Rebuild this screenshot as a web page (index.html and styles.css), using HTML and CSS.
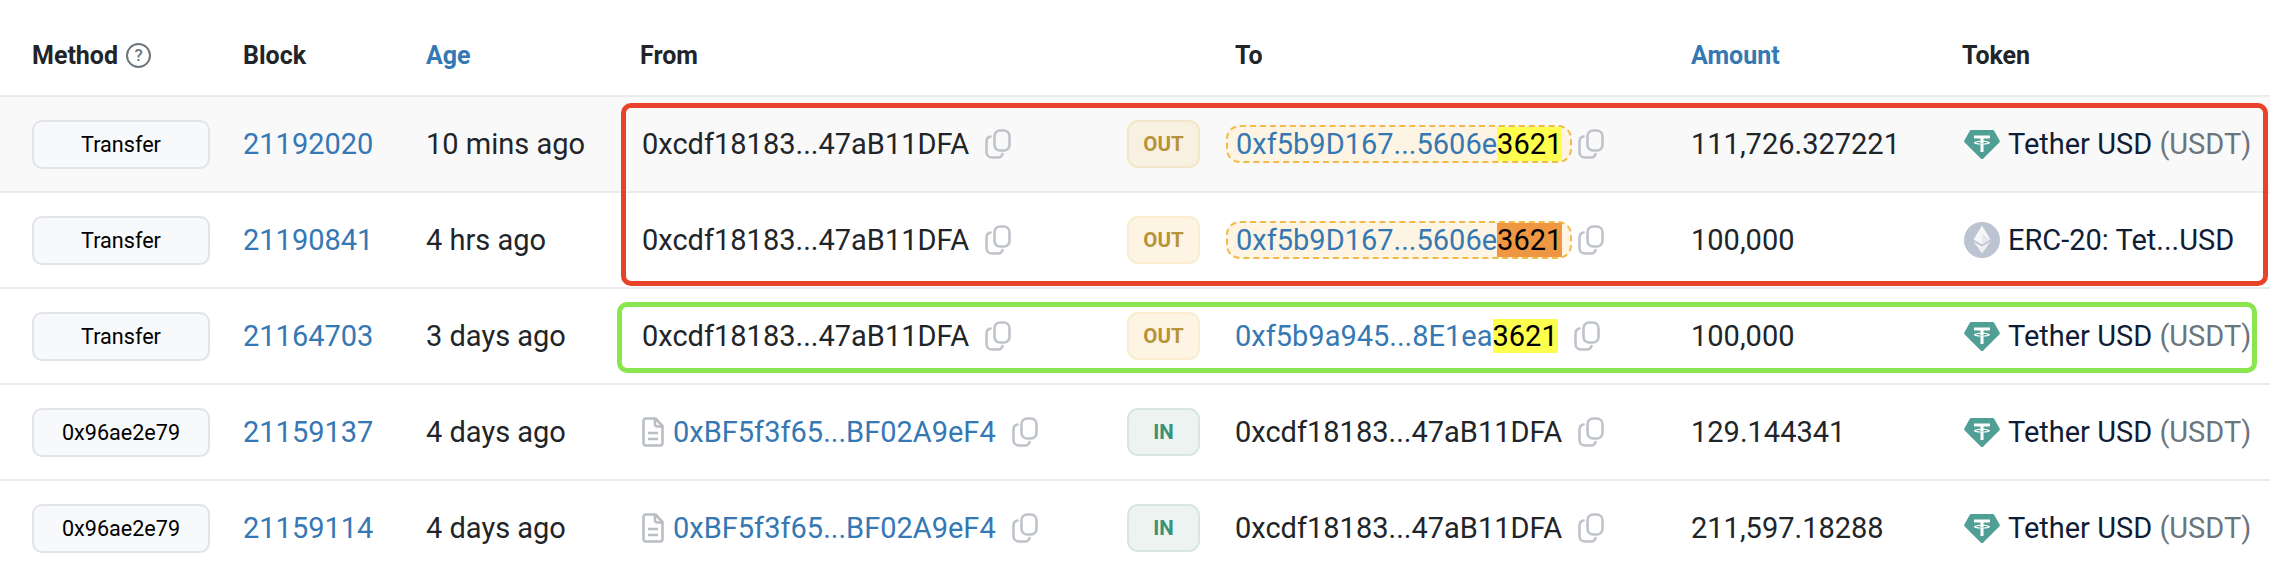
FILE: index.html
```html
<!DOCTYPE html>
<html lang="en">
<head>
<meta charset="utf-8">
<title>Transactions</title>
<link rel="stylesheet" href="styles.css">
</head>
<body>
<svg class="defs" width="0" height="0" aria-hidden="true">
  <symbol id="copy" viewBox="0 0 26 30">
    <rect x="9.5" y="1.5" width="15" height="20" rx="5.5" fill="none" stroke="currentColor" stroke-width="2.6"/>
    <path d="M5.5 7.5C3 8 1.5 10 1.5 12.5V23c0 3 2.400 5.500 5.500 5.500h6c2.500 0 4-1.500 4.500-3.500" fill="none" stroke="currentColor" stroke-width="2.600" stroke-linecap="round"/>
  </symbol>
  <symbol id="file" viewBox="0 0 22 30">
    <path d="M4 1.500h9.500l7 7.500v17c0 1.500-1 2.500-2.500 2.500H4c-1.500 0-2.500-1-2.500-2.500V4C1.500 2.500 2.500 1.500 4 1.500Z" fill="none" stroke="currentColor" stroke-width="2.600" stroke-linejoin="round"/>
    <path d="M13 2v5c0 1.500 1 2.500 2.500 2.500H20M6 16h10M6 22h10" fill="none" stroke="currentColor" stroke-width="2.600"/>
  </symbol>
  <symbol id="tether" viewBox="0 0 36 29">
    <path d="M7.500 0h21c.8 0 1.300.3 1.800 1l5.300 9.500c.4.700.3 1.400-.3 2L19.300 28.400c-.8.800-1.800.8-2.600 0L.7 12.500c-.6-.6-.7-1.300-.3-2L5.700 1C6.200.3 6.700 0 7.500 0Z" fill="#4f9f94"/>
    <path d="M10 5.500h16v3h-6.500v2.300c3.500.2 6.500.9 6.500 1.900s-3 1.700-6.500 1.900V22h-3v-7.400c-3.500-.2-6.500-.9-6.500-1.900s3-1.700 6.500-1.900V8.500H10Zm6.500 6.500c-2.300.1-4.200.4-4.700.8.800.5 3.300.8 6.200.8s5.400-.3 6.200-.8c-.5-.4-2.400-.7-4.700-.8v1.200h-3Z" fill="#fff"/>
  </symbol>
  <symbol id="eth" viewBox="0 0 36 36">
    <circle cx="18" cy="18" r="18" fill="#bcc3d1"/>
    <path d="M18 3.500 9.500 17.500 18 22.500l8.500-5Z" fill="#f6f7f9"/>
    <path d="M18 12v10.500l8.500-5Z" fill="#e6e8ee"/>
    <path d="M9.500 19.500 18 31.500l8.500-12L18 24.500Z" fill="#eef0f4"/>
  </symbol>
</svg>

<main class="table">
  <div class="row head">
    <div class="cell first">Method <span class="help">?</span></div>
    <div class="cell">Block</div>
    <div class="cell link">Age</div>
    <div class="cell from-head">From</div>
    <div class="cell"></div>
    <div class="cell to">To</div>
    <div class="cell link">Amount</div>
    <div class="cell">Token</div>
  </div>

  <div class="row shaded">
    <div class="cell first"><span class="method">Transfer</span></div>
    <div class="cell link">21192020</div>
    <div class="cell">10 mins ago</div>
    <div class="cell">0xcdf18183...47aB11DFA<svg class="copy from-copy"><use href="#copy"/></svg></div>
    <div class="cell"><span class="dir out dim">OUT</span></div>
    <div class="cell"><span class="pill link">0xf5b9D167...5606e<mark class="yellow">3621</mark></span><svg class="copy pill-copy"><use href="#copy"/></svg></div>
    <div class="cell">111,726.327221</div>
    <div class="cell token"><svg class="tether"><use href="#tether"/></svg>Tether USD&nbsp;<span class="sym">(USDT)</span></div>
  </div>

  <div class="row">
    <div class="cell first"><span class="method">Transfer</span></div>
    <div class="cell link">21190841</div>
    <div class="cell">4 hrs ago</div>
    <div class="cell">0xcdf18183...47aB11DFA<svg class="copy from-copy"><use href="#copy"/></svg></div>
    <div class="cell"><span class="dir out">OUT</span></div>
    <div class="cell"><span class="pill link">0xf5b9D167...5606e<mark class="orange">3621</mark></span><svg class="copy pill-copy"><use href="#copy"/></svg></div>
    <div class="cell">100,000</div>
    <div class="cell token"><svg class="eth"><use href="#eth"/></svg>ERC-20: Tet...USD</div>
  </div>

  <div class="row">
    <div class="cell first"><span class="method">Transfer</span></div>
    <div class="cell link">21164703</div>
    <div class="cell">3 days ago</div>
    <div class="cell">0xcdf18183...47aB11DFA<svg class="copy from-copy"><use href="#copy"/></svg></div>
    <div class="cell"><span class="dir out">OUT</span></div>
    <div class="cell to"><span class="link">0xf5b9a945...8E1ea<mark class="yellow">3621</mark></span><svg class="copy to-copy"><use href="#copy"/></svg></div>
    <div class="cell">100,000</div>
    <div class="cell token"><svg class="tether"><use href="#tether"/></svg>Tether USD&nbsp;<span class="sym">(USDT)</span></div>
  </div>

  <div class="row">
    <div class="cell first"><span class="method">0x96ae2e79</span></div>
    <div class="cell link">21159137</div>
    <div class="cell">4 days ago</div>
    <div class="cell"><svg class="file"><use href="#file"/></svg><span class="link">0xBF5f3f65...BF02A9eF4</span><svg class="copy from-copy"><use href="#copy"/></svg></div>
    <div class="cell"><span class="dir in">IN</span></div>
    <div class="cell to">0xcdf18183...47aB11DFA<svg class="copy to-copy"><use href="#copy"/></svg></div>
    <div class="cell">129.144341</div>
    <div class="cell token"><svg class="tether"><use href="#tether"/></svg>Tether USD&nbsp;<span class="sym">(USDT)</span></div>
  </div>

  <div class="row">
    <div class="cell first"><span class="method">0x96ae2e79</span></div>
    <div class="cell link">21159114</div>
    <div class="cell">4 days ago</div>
    <div class="cell"><svg class="file"><use href="#file"/></svg><span class="link">0xBF5f3f65...BF02A9eF4</span><svg class="copy from-copy"><use href="#copy"/></svg></div>
    <div class="cell"><span class="dir in">IN</span></div>
    <div class="cell to">0xcdf18183...47aB11DFA<svg class="copy to-copy"><use href="#copy"/></svg></div>
    <div class="cell">211,597.18288</div>
    <div class="cell token"><svg class="tether"><use href="#tether"/></svg>Tether USD&nbsp;<span class="sym">(USDT)</span></div>
  </div>

  <div class="box red"></div>
  <div class="box green"></div>
</main>
</body>
</html>
```
FILE: styles.css
```css
* { box-sizing: border-box; }
html, body { margin: 0; height: 566px; overflow: hidden; background: #fff; }
body { font-family: Roboto, "Liberation Sans", sans-serif; font-size: 29px; color: #212529; }
.defs { display: block; height: 0; }
.table { position: relative; width: 2270px; }
.row {
  display: grid;
  grid-template-columns: 243px 183px 216px 485px 99px 465px 271px 308px;
  height: 96px;
  border-bottom: 2px solid #e9ecef;
}
.shaded { background: #f9f9f9; }
.cell { display: flex; align-items: center; white-space: nowrap; min-width: 0; }
.first { padding-left: 32px; }
.to { padding-left: 9px; }
.head { height: 97px; font-weight: 700; font-size: 25px; padding-top: 15px; }
.from-head { margin-left: -2px; }
.link { color: #3578b3; }
.help {
  display: inline-flex; align-items: center; justify-content: center;
  width: 25px; height: 25px; margin-left: 8px;
  border: 2.500px solid #6c757d; border-radius: 50%;
  font-size: 17px; font-weight: 500; color: #6c757d;
}
.method {
  display: flex; align-items: center; justify-content: center;
  width: 178px; height: 49px;
  border: 2px solid #e2e4e7; border-radius: 10px; background: #f8f9fa;
  font-size: 21.600px; color: #000;
}
.dir {
  display: flex; align-items: center; justify-content: center;
  width: 73px; height: 48px; border-radius: 11px;
  font-size: 20.500px; font-weight: 700;
}
.out { color: #b8923a; background: #fdf4e3; border: 2px solid #f9ecd1; }
.out.dim { background: #f8f0e0; border-color: #f3e6c9; }
.in { color: #3a9274; background: #ecf3f1; border: 2px solid #d8e6e3; }
.copy { width: 26px; height: 30px; color: #bfc3ca; flex: none; }
.from-copy { margin-left: 16px; }
.pill-copy { margin-left: 6px; }
.to-copy { margin-left: 16px; }
.file { width: 22px; height: 30px; color: #b9bdc4; flex: none; margin-right: 9px; }
.pill {
  display: flex; align-items: center;
  height: 38px; padding: 0 8px;
  background: #fdf4e3; border: 2px dashed #f1bc45; border-radius: 14px;
}
mark { color: #000; }
.yellow { background: #ffff4d; }
.orange { background: #ee9642; }
.token { color: #0f1d35; padding-left: 2px; }
.tether { width: 36px; height: 29px; margin-right: 8px; flex: none; }
.eth { width: 36px; height: 36px; margin-right: 8px; flex: none; }
.sym { color: #6c757d; }
.box { position: absolute; border-style: solid; border-width: 5px; border-radius: 10px; }
.red { left: 621px; top: 103px; width: 1647px; height: 183px; border-color: #e8432a; }
.green { left: 617px; top: 302px; width: 1640px; height: 71px; border-color: #8ae64e; }
```
